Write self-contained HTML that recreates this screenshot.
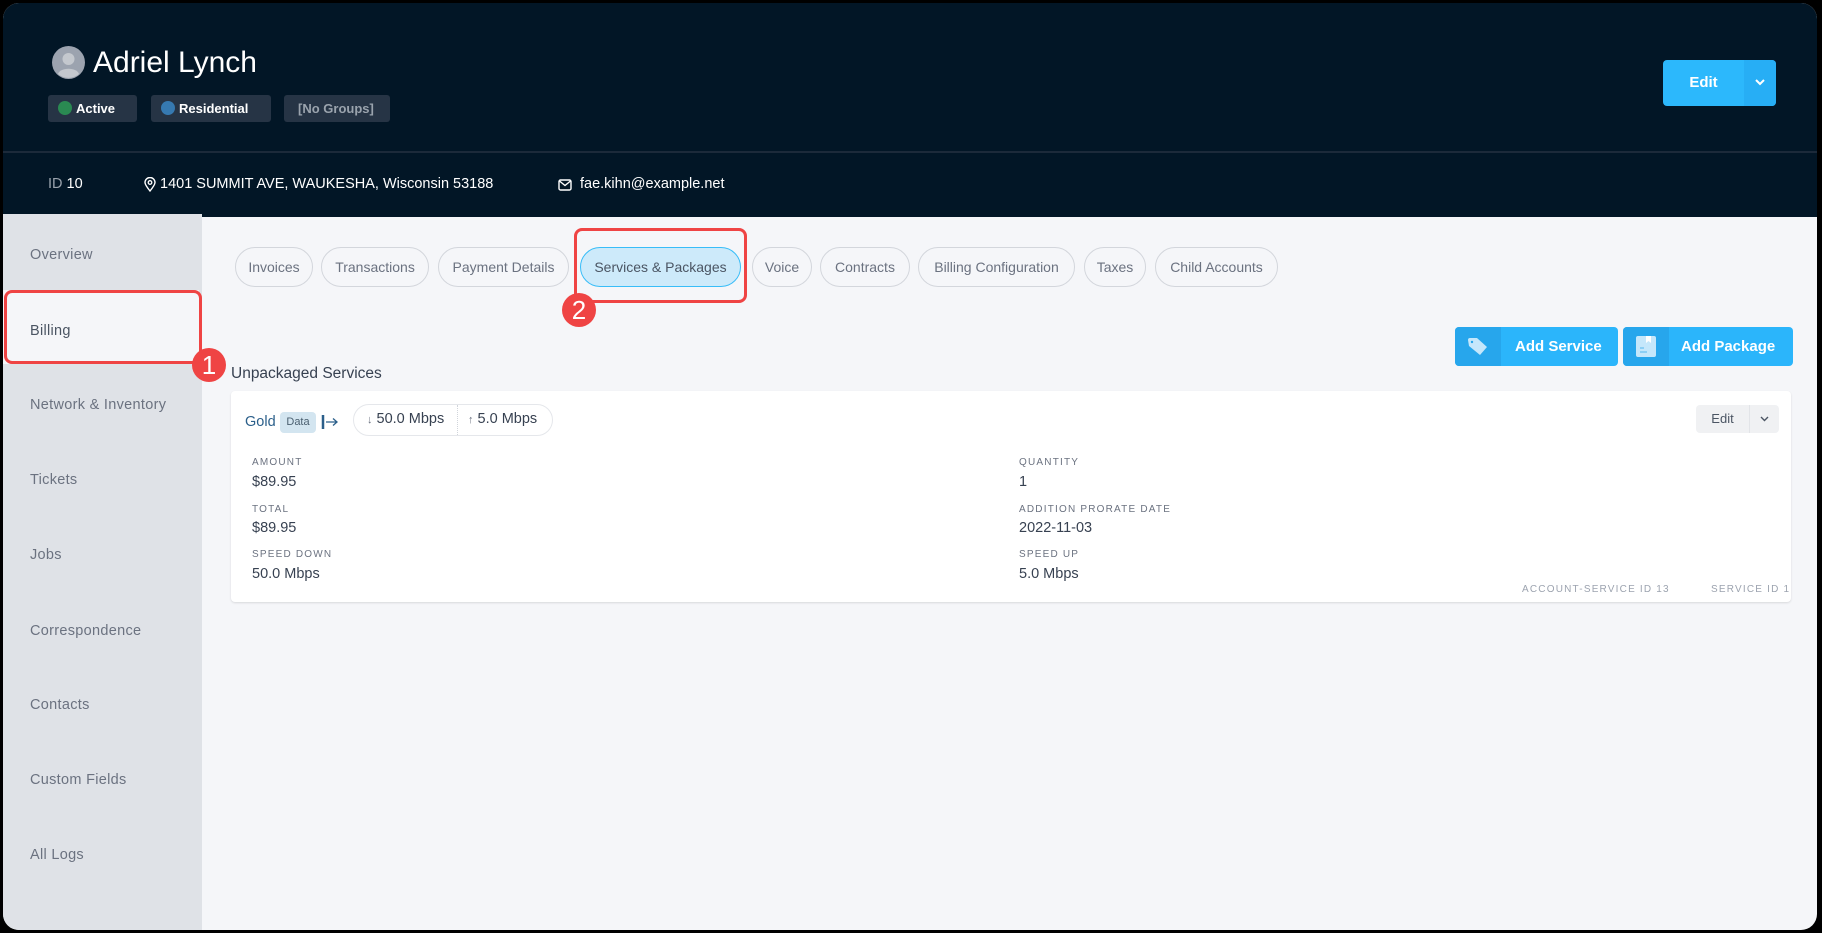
<!DOCTYPE html>
<html><head><meta charset="utf-8"><style>
*{box-sizing:border-box;margin:0;padding:0}
html,body{width:1822px;height:933px;background:#000;overflow:hidden;font-family:"Liberation Sans",sans-serif}
#f{position:absolute;left:3px;top:3px;width:1814px;height:927px;border-radius:16px;overflow:hidden;background:#f5f6f9}
.abs{position:absolute}
#hdr{position:absolute;left:-3px;top:-3px;width:1822px;height:217px;background:#021626}
.badge{position:absolute;top:95px;height:27px;background:#263445;border-radius:3px;color:#fff;font-weight:bold;font-size:13px;line-height:27px;padding-left:10px}
.dot{display:inline-block;width:14px;height:14px;border-radius:50%;vertical-align:-2px;margin-right:4px}
#side{position:absolute;left:-3px;top:211px;width:202px;height:724px;background:#dfe2e7}
.si{position:absolute;left:27px;font-size:14.5px;color:#6b7280;letter-spacing:.3px}
.tab{position:absolute;top:244px;height:40px;border:1px solid #d3d6dc;border-radius:20px;font-size:14px;color:#6b7280;line-height:38px;text-align:center}
.red{position:absolute;border:3px solid #ef4444;border-radius:8px}
.num{position:absolute;width:34px;height:34px;border-radius:50%;background:#ef4444;color:#fff;font-size:26px;line-height:34px;text-align:center}
.btn{position:absolute;top:324px;height:39px;background:#2bb5fb;border-radius:4px;color:#fff;font-weight:bold;font-size:15px;line-height:39px}
.btn .ic{position:absolute;left:0;top:0;width:46px;height:39px;background:#27a6ec;border-radius:4px 0 0 4px}
.lbl{position:absolute;font-size:10px;color:#6b7280;letter-spacing:1.2px}
.val{position:absolute;font-size:14.5px;color:#374151}
</style></head><body><div id="f">
<div id="hdr">
 <svg class="abs" style="left:52px;top:46px" width="33" height="33" viewBox="0 0 33 33"><circle cx="16.5" cy="16.5" r="16.5" fill="#9ca3af"/><circle cx="16.5" cy="13" r="6" fill="#c4c8ce"/><path d="M6 28c2-7 19-7 21 0a16 16 0 0 1-21 0z" fill="#c4c8ce"/></svg>
 <div class="abs" style="left:93px;top:46px;font-size:30px;color:#fff">Adriel Lynch</div>
 <div class="badge" style="left:48px;width:89px"><span class="dot" style="background:#2a8a52"></span>Active</div>
 <div class="badge" style="left:151px;width:120px"><span class="dot" style="background:#3679b0"></span>Residential</div>
 <div class="badge" style="left:284px;width:106px;color:#9aa3ad;padding-left:14px">[No Groups]</div>
 <div class="abs" style="left:1663px;top:60px;width:113px;height:46px;background:#2cb8fc;border-radius:4px"></div>
 <div class="abs" style="left:1744px;top:60px;width:32px;height:46px;background:#27aef5;border-radius:0 4px 4px 0"></div>
 <div class="abs" style="left:1663px;top:60px;width:81px;line-height:46px;text-align:center;color:#fff;font-weight:bold;font-size:15px">Edit</div>
 <svg class="abs" style="left:1755px;top:78px" width="10" height="8"><path d="M1 2l4 4 4-4" stroke="#fff" stroke-width="2" fill="none"/></svg>
 <div class="abs" style="left:3px;top:151px;width:1816px;height:2px;background:#1c2a3a"></div>
 <div class="abs" style="left:48px;top:176px;font-size:14.5px;color:#fff"><span style="color:#9aa3ad">ID</span> 10</div>
 <svg class="abs" style="left:144px;top:177px" width="12" height="15" viewBox="0 0 12 15"><path d="M6 14C2 9 1 7 1 5.5a5 5 0 0 1 10 0C11 7 10 9 6 14z" stroke="#fff" stroke-width="1.4" fill="none"/><circle cx="6" cy="5.5" r="1.8" stroke="#fff" stroke-width="1.3" fill="none"/></svg>
 <div class="abs" style="left:160px;top:176px;font-size:14.5px;color:#fff">1401 SUMMIT AVE, WAUKESHA, Wisconsin 53188</div>
 <svg class="abs" style="left:558px;top:179px" width="14" height="12" viewBox="0 0 14 12"><rect x="1" y="1" width="12" height="10" rx="1.5" stroke="#fff" stroke-width="1.4" fill="none"/><path d="M1.5 2l5.5 4.5L12.5 2" stroke="#fff" stroke-width="1.4" fill="none"/></svg>
 <div class="abs" style="left:580px;top:176px;font-size:14.5px;color:#fff">fae.kihn@example.net</div>
</div>
<div id="side"></div>
<div class="abs" style="left:0;top:287px;width:196px;height:74px;background:#f5f6f9"></div>
<div class="si" style="top:244px">Overview</div>
<div class="si" style="top:320px;color:#4b5563">Billing</div>
<div class="si" style="top:394px">Network &amp; Inventory</div>
<div class="si" style="top:469px">Tickets</div>
<div class="si" style="top:544px">Jobs</div>
<div class="si" style="top:620px">Correspondence</div>
<div class="si" style="top:694px">Contacts</div>
<div class="si" style="top:769px">Custom Fields</div>
<div class="si" style="top:844px">All Logs</div>
<div class="red" style="left:1px;top:287px;width:198px;height:74px"></div>
<div class="num" style="left:189px;top:345px">1</div>

<div class="tab" style="left:232px;width:78px">Invoices</div>
<div class="tab" style="left:318px;width:108px">Transactions</div>
<div class="tab" style="left:435px;width:131px">Payment Details</div>
<div class="tab" style="left:577px;width:161px;background:#cdeafa;border-color:#38bdf8;color:#4b5563">Services &amp; Packages</div>
<div class="tab" style="left:749px;width:60px">Voice</div>
<div class="tab" style="left:817px;width:90px">Contracts</div>
<div class="tab" style="left:915px;width:157px">Billing Configuration</div>
<div class="tab" style="left:1081px;width:62px">Taxes</div>
<div class="tab" style="left:1152px;width:123px">Child Accounts</div>
<div class="red" style="left:571px;top:225px;width:173px;height:75px"></div>
<div class="num" style="left:559px;top:290px">2</div>

<div class="btn" style="left:1452px;width:163px"><div class="ic"><svg style="position:absolute;left:12px;top:10px" width="22" height="20" viewBox="0 0 22 20"><path d="M1 3a2 2 0 0 1 2-2h7l10 9-7 8L2 9z" fill="#c5e7fb"/><circle cx="5" cy="5" r="1.2" fill="#27a6ec"/></svg></div><span style="position:absolute;left:60px">Add Service</span></div>
<div class="btn" style="left:1620px;width:170px"><div class="ic"><svg style="position:absolute;left:13px;top:9px" width="20" height="21" viewBox="0 0 20 21"><rect x="0" y="0" width="20" height="21" rx="2" fill="#c5e7fb"/><path d="M10 0h5v7l-2.5-2-2.5 2z" fill="#fff"/><rect x="4" y="11" width="4" height="2" fill="#8ccff5"/><rect x="4" y="15" width="7" height="2" fill="#8ccff5"/></svg></div><span style="position:absolute;left:58px">Add Package</span></div>

<div class="abs" style="left:228px;top:362px;font-size:15.5px;color:#374151">Unpackaged Services</div>
<div class="abs" style="left:228px;top:388px;width:1560px;height:211px;background:#fff;border-radius:4px;box-shadow:0 1px 2px rgba(0,0,0,.12)"></div>
<div class="abs" style="left:242px;top:411px;font-size:14.5px;color:#2b5f8a">Gold</div>
<div class="abs" style="left:277px;top:409px;width:36px;height:21px;background:#d3e5f0;border-radius:4px;font-size:11px;color:#4b6070;text-align:center;line-height:21px">Data</div>
<svg class="abs" style="left:318px;top:411px" width="18" height="16"><path d="M2 1v14" stroke="#2b5f8a" stroke-width="2.5"/><path d="M5 8h11M12 4.5l4 3.5-4 3.5" stroke="#2b5f8a" stroke-width="1.3" fill="none"/></svg>
<div class="abs" style="left:350px;top:401px;width:200px;height:32px;border:1px solid #e5e7eb;border-radius:16px"></div>
<div class="abs" style="left:454px;top:402px;width:0;height:30px;border-left:1px dotted #d1d5db"></div>
<div class="abs" style="left:364px;top:408px;font-size:14.5px;color:#374151"><span style="font-size:11px;color:#6b7280">↓</span> 50.0 Mbps</div>
<div class="abs" style="left:465px;top:408px;font-size:14.5px;color:#374151"><span style="font-size:11px;color:#6b7280">↑</span> 5.0 Mbps</div>
<div class="abs" style="left:1693px;top:402px;width:83px;height:28px;background:#f0f1f3;border-radius:4px"></div>
<div class="abs" style="left:1746px;top:402px;width:1px;height:28px;background:#e2e4e8"></div>
<div class="abs" style="left:1693px;top:402px;width:53px;line-height:28px;text-align:center;font-size:13px;color:#4b5563">Edit</div>
<svg class="abs" style="left:1757px;top:413px" width="9" height="6"><path d="M1 1l3.5 3.5L8 1" stroke="#4b5563" stroke-width="1.4" fill="none"/></svg>

<div class="lbl" style="left:249px;top:454px">AMOUNT</div><div class="val" style="left:249px;top:471px">$89.95</div>
<div class="lbl" style="left:249px;top:501px">TOTAL</div><div class="val" style="left:249px;top:517px">$89.95</div>
<div class="lbl" style="left:249px;top:546px">SPEED DOWN</div><div class="val" style="left:249px;top:563px">50.0 Mbps</div>
<div class="lbl" style="left:1016px;top:454px">QUANTITY</div><div class="val" style="left:1016px;top:471px">1</div>
<div class="lbl" style="left:1016px;top:501px">ADDITION PRORATE DATE</div><div class="val" style="left:1016px;top:517px">2022-11-03</div>
<div class="lbl" style="left:1016px;top:546px">SPEED UP</div><div class="val" style="left:1016px;top:563px">5.0 Mbps</div>
<div class="lbl" style="left:1519px;top:581px;color:#9ca3af">ACCOUNT-SERVICE ID 13</div>
<div class="lbl" style="left:1708px;top:581px;color:#9ca3af">SERVICE ID 1</div>
</div></body></html>
